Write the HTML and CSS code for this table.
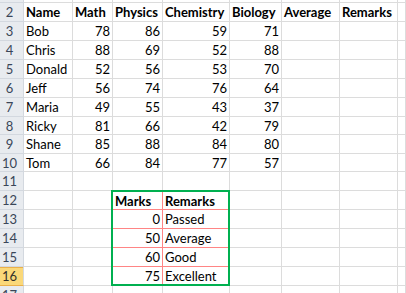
FILE: index.html
```html
<!DOCTYPE html>
<html>
<head>
<meta charset="utf-8">
<link rel="stylesheet" href="styles.css">
</head>
<body>
<div class="sheet">
  <div class="rh"></div><div class="c"></div><div class="c"></div><div class="c"></div><div class="c"></div><div class="c"></div><div class="c"></div><div class="c"></div><div class="c"></div>

  <div class="rh">2</div><div class="c b">Name</div><div class="c b">Math</div><div class="c b">Physics</div><div class="c b">Chemistry</div><div class="c b">Biology</div><div class="c b">Average</div><div class="c b">Remarks</div><div class="c"></div>

  <div class="rh">3</div><div class="c">Bob</div><div class="c n">78</div><div class="c n">86</div><div class="c n">59</div><div class="c n">71</div><div class="c"></div><div class="c"></div><div class="c"></div>

  <div class="rh">4</div><div class="c">Chris</div><div class="c n">88</div><div class="c n">69</div><div class="c n">52</div><div class="c n">88</div><div class="c"></div><div class="c"></div><div class="c"></div>

  <div class="rh">5</div><div class="c">Donald</div><div class="c n">52</div><div class="c n">56</div><div class="c n">53</div><div class="c n">70</div><div class="c"></div><div class="c"></div><div class="c"></div>

  <div class="rh">6</div><div class="c">Jeff</div><div class="c n">56</div><div class="c n">74</div><div class="c n">76</div><div class="c n">64</div><div class="c"></div><div class="c"></div><div class="c"></div>

  <div class="rh">7</div><div class="c">Maria</div><div class="c n">49</div><div class="c n">55</div><div class="c n">43</div><div class="c n">37</div><div class="c"></div><div class="c"></div><div class="c"></div>

  <div class="rh">8</div><div class="c">Ricky</div><div class="c n">81</div><div class="c n">66</div><div class="c n">42</div><div class="c n">79</div><div class="c"></div><div class="c"></div><div class="c"></div>

  <div class="rh">9</div><div class="c">Shane</div><div class="c n">85</div><div class="c n">88</div><div class="c n">84</div><div class="c n">80</div><div class="c"></div><div class="c"></div><div class="c"></div>

  <div class="rh">10</div><div class="c">Tom</div><div class="c n">66</div><div class="c n">84</div><div class="c n">77</div><div class="c n">57</div><div class="c"></div><div class="c"></div><div class="c"></div>

  <div class="rh">11</div><div class="c"></div><div class="c"></div><div class="c"></div><div class="c"></div><div class="c"></div><div class="c"></div><div class="c"></div><div class="c"></div>

  <div class="rh">12</div><div class="c"></div><div class="c"></div><div class="c"></div><div class="c"></div><div class="c"></div><div class="c"></div>
  <div class="rh">13</div><div class="c"></div><div class="c"></div><div class="c"></div><div class="c"></div><div class="c"></div><div class="c"></div>
  <div class="rh">14</div><div class="c"></div><div class="c"></div><div class="c"></div><div class="c"></div><div class="c"></div><div class="c"></div>
  <div class="rh">15</div><div class="c"></div><div class="c"></div><div class="c"></div><div class="c"></div><div class="c"></div><div class="c"></div>
  <div class="rh sel">16</div><div class="c"></div><div class="c"></div><div class="c"></div><div class="c"></div><div class="c"></div><div class="c"></div>

  <div class="rh">17</div><div class="c"></div><div class="c"></div><div class="c"></div><div class="c"></div><div class="c"></div><div class="c"></div><div class="c"></div><div class="c"></div>

  <div class="lookup">
    <div class="lc b">Marks</div><div class="lc lr b">Remarks</div>
    <div class="lc n">0</div><div class="lc lr">Passed</div>
    <div class="lc n">50</div><div class="lc lr">Average</div>
    <div class="lc n">60</div><div class="lc lr">Good</div>
    <div class="lc n last">75</div><div class="lc lr last">Excellent</div>
  </div>
</div>
</body>
</html>
```

FILE: styles.css
```css
html, body {
  margin: 0;
  padding: 0;
  background: #ffffff;
}
body {
  width: 406px;
  height: 293px;
  overflow: hidden;
  font-family: "Lato", "Liberation Sans", sans-serif;
  font-size: 13px;
  color: #000000;
}
.sheet {
  display: grid;
  grid-template-columns: 24px 49px 40px 50px 67px 52px 58px 58px 8px;
  grid-template-rows: 3px 19px 19px 19px 19px 19px 19px 18px 19px 18px 19px 19px 19px 19px 19px 19px 19px;
}
.c, .rh, .lc {
  box-sizing: border-box;
  display: flex;
  align-items: center;
  white-space: nowrap;
  overflow: visible;
}
.c {
  border-right: 1px solid #dcdcdc;
  border-bottom: 1px solid #dcdcdc;
  padding: 0 2px;
}
.b {
  font-weight: bold;
}
.n {
  justify-content: flex-end;
}
.rh {
  background: #e8ebef;
  border-bottom: 1px solid #d3d8df;
  border-right: 1px solid #d3d8df;
  justify-content: center;
  padding-right: 4px;
  color: #3a4658;
  overflow: hidden;
}
.rh.sel {
  background: #fad879;
  border-bottom-color: #eab04a;
  box-shadow: inset 0 1px 0 #eab04a;
  color: #33302a;
}
.lookup {
  grid-column: 4 / 6;
  grid-row: 12 / 17;
  margin: -1px 0 0 -2px;
  border: 2px solid #00b050;
  background: #ffffff;
  display: grid;
  grid-template-columns: 50px 65px;
  grid-template-rows: 18px 19px 19px 19px 17px;
}
.lc {
  border-bottom: 1px solid #ff8585;
  border-right: 1px solid #ff8585;
  padding: 0 2px;
}
.lc.lr {
  border-right: none;
}
.lc.last {
  border-bottom: none;
}
```
